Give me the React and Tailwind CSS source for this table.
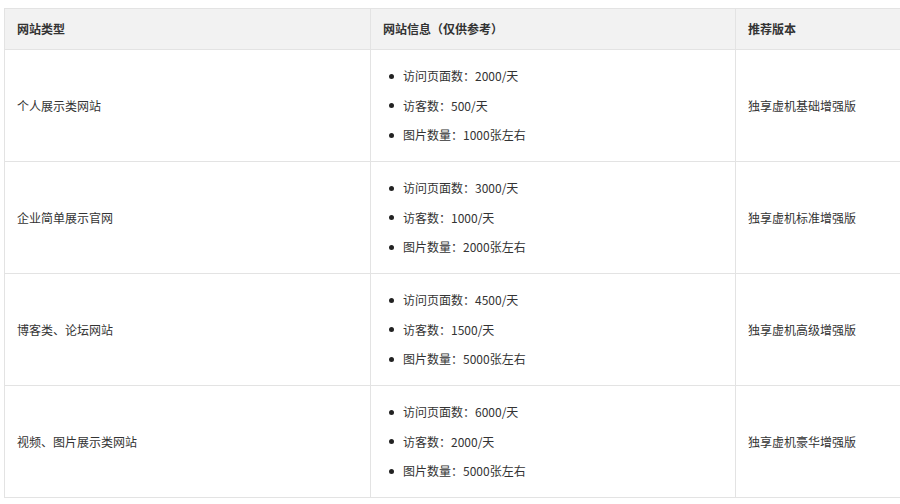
const ROWS = [
  { type: "个人展示类网站", pv: "2000/天", uv: "500/天", img: "1000张左右", plan: "独享虚机基础增强版" },
  { type: "企业简单展示官网", pv: "3000/天", uv: "1000/天", img: "2000张左右", plan: "独享虚机标准增强版" },
  { type: "博客类、论坛网站", pv: "4500/天", uv: "1500/天", img: "5000张左右", plan: "独享虚机高级增强版" },
  { type: "视频、图片展示类网站", pv: "6000/天", uv: "2000/天", img: "5000张左右", plan: "独享虚机豪华增强版" },
];

function Item({ children }) {
  return (
    <li className="flex items-center py-[6px]">
      <span className="ml-[6px] mr-[9px] h-[5px] w-[5px] rounded-full bg-[#222]" />
      {children}
    </li>
  );
}

export default function App() {
  return (
    <div
      className="w-[900px] h-[504px] overflow-hidden bg-white text-[12px] text-[#333]"
      style={{ fontFamily: '"Noto Sans CJK SC", "Noto Sans", sans-serif' }}
    >
      <table className="ml-1 mt-2 w-[898px] border-collapse table-fixed">
        <colgroup>
          <col className="w-[366px]" />
          <col className="w-[365px]" />
          <col />
        </colgroup>
        <thead>
          <tr className="h-[41px] bg-[#f2f2f2]">
            <th className="border border-[#e3e3e3] px-3 text-left font-semibold">网站类型</th>
            <th className="border border-[#e3e3e3] px-3 text-left font-semibold">网站信息（仅供参考）</th>
            <th className="border border-[#e3e3e3] px-3 text-left font-semibold">推荐版本</th>
          </tr>
        </thead>
        <tbody>
          {ROWS.map((r) => (
            <tr key={r.type} className="h-[112px]">
              <td className="border border-[#e3e3e3] px-3">{r.type}</td>
              <td className="border border-[#e3e3e3] px-3">
                <ul className="leading-[17.5px]">
                  <Item>访问页面数：{r.pv}</Item>
                  <Item>访客数：{r.uv}</Item>
                  <Item>图片数量：{r.img}</Item>
                </ul>
              </td>
              <td className="border border-[#e3e3e3] px-3">{r.plan}</td>
            </tr>
          ))}
        </tbody>
      </table>
    </div>
  );
}
